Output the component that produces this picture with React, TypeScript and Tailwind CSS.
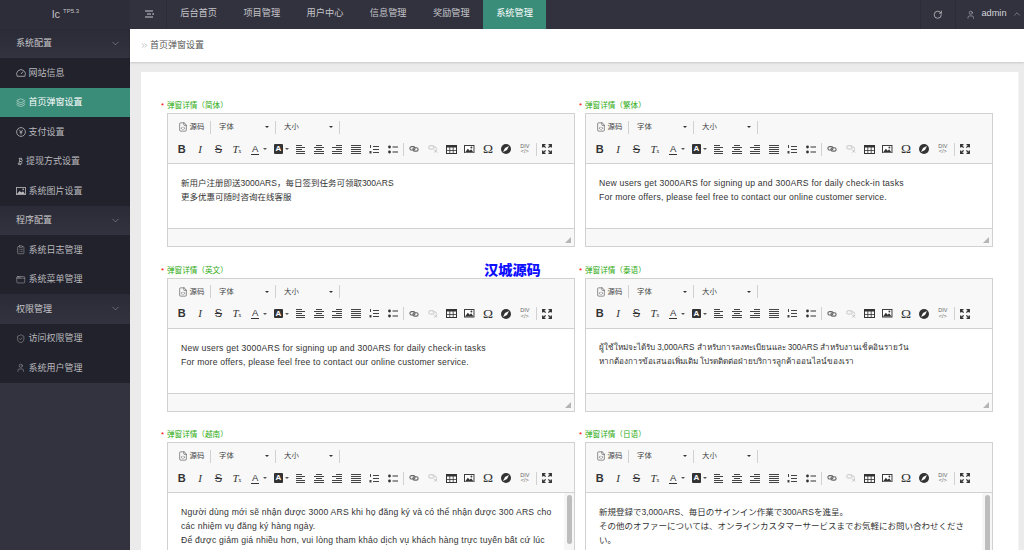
import React from "react";
import { ChevronDown, ChevronUp, RotateCw, User, Layers, Bitcoin, ClipboardList, AppWindow, ShieldCheck, FileCode, ChevronsRight } from "lucide-react";

const Lines = ({ rows }: { rows: [number, number][] }) => (
  <svg width="10" height="9" viewBox="0 0 10 9" fill="#444">
    {rows.map(([x, w], i) => (
      <rect key={i} x={x} y={i * 2} width={w} height="1" />
    ))}
  </svg>
);

const Btn = ({ children }: { children: React.ReactNode }) => (
  <span className="w-[18.4px] h-[14px] flex items-center justify-center shrink-0">{children}</span>
);

const CaretBtn = ({ children }: { children: React.ReactNode }) => (
  <span className="w-[22.7px] h-[14px] flex items-center pl-[5px] shrink-0 relative">
    {children}
    <span className="absolute left-[16.5px] top-[6px] w-0 h-0 border-x-[2px] border-x-transparent border-t-[2px] border-t-[#555]" />
  </span>
);

const Sep = () => <span className="w-px h-[13px] bg-[#d1d1d1] shrink-0" />;

const Select = ({ label, width }: { label: string; width: string }) => (
  <span className={`flex items-center ${width} h-[14px] pl-[8px] relative shrink-0`}>
    <span className="text-[7.4px] text-[#444]">{label}</span>
    <span className="absolute right-[6px] top-[6px] w-0 h-0 border-x-[2px] border-x-transparent border-t-[2px] border-t-[#333]" />
  </span>
);

const Toolbar = () => (
  <div className="h-[50px] bg-[#f8f8f8] border-b border-[#d1d1d1] shrink-0">
    <div className="h-[14px] mt-[6px] flex items-center pl-[10px]">
      <FileCode size={10} strokeWidth={1.4} color="#444" />
      <span className="text-[7.4px] text-[#444] ml-[1.5px] w-[20.5px]">源码</span>
      <Sep />
      <Select label="字体" width="w-[64px]" />
      <Sep />
      <Select label="大小" width="w-[63px]" />
      <Sep />
    </div>
    <div className="h-[14px] mt-[8px] flex items-center pl-[4.5px]">
      <Btn><span className="text-[11px] font-bold text-[#333]">B</span></Btn>
      <Btn><span className="text-[11px] italic font-['Liberation_Serif',serif] text-[#333]">I</span></Btn>
      <Btn><span className="text-[11px] line-through text-[#333]">S</span></Btn>
      <Btn><span className="text-[11px] italic font-['Liberation_Serif',serif] text-[#333] leading-none">T<span className="text-[5.5px] not-italic">x</span></span></Btn>
      <CaretBtn><span className="text-[9.5px] leading-[10px] border-b border-[#333] text-[#333] px-[1px]">A</span></CaretBtn>
      <CaretBtn><span className="w-[9.5px] h-[9.5px] bg-[#333] rounded-[1px] flex items-center justify-center text-[8px] font-bold text-white">A</span></CaretBtn>
      <Btn><Lines rows={[[0, 6], [0, 9], [0, 6], [0, 9], [0, 9]]} /></Btn>
      <Btn><Lines rows={[[2, 6], [0, 10], [2, 6], [0, 10], [0, 10]]} /></Btn>
      <Btn><Lines rows={[[4, 6], [0, 10], [4, 6], [0, 10], [0, 10]]} /></Btn>
      <Btn><Lines rows={[[0, 10], [0, 10], [0, 10], [0, 10], [0, 10]]} /></Btn>
      <Btn>
        <svg width="10" height="9" viewBox="0 0 10 9" fill="#444">
          <rect x="4" y="1" width="6" height="1" /><rect x="4" y="4" width="6" height="1" /><rect x="4" y="7" width="6" height="1" />
          <rect x="1" y="0" width="1" height="3" /><rect x="0.5" y="6" width="2" height="2.5" />
        </svg>
      </Btn>
      <Btn>
        <svg width="10" height="9" viewBox="0 0 10 9" fill="#333">
          <circle cx="1.5" cy="2" r="1.4" /><circle cx="1.5" cy="7" r="1.4" /><rect x="4.5" y="1.5" width="5.5" height="1" /><rect x="4.5" y="6.5" width="5.5" height="1" />
        </svg>
      </Btn>
      <span className="w-px h-[13px] bg-[#d1d1d1] shrink-0 ml-[1.5px] mr-[1px]" />
      <Btn>
        <svg width="10" height="6" viewBox="0 0 11 7" fill="none" stroke="#666" strokeWidth="1.3">
          <rect x="0.7" y="0.7" width="6" height="4" rx="2" /><rect x="4.3" y="2" width="6" height="4" rx="2" />
        </svg>
      </Btn>
      <Btn>
        <svg width="10" height="8" viewBox="0 0 11 9" fill="none" stroke="#d0d0d0" strokeWidth="1.3">
          <rect x="0.7" y="0.7" width="6" height="4" rx="2" /><path d="M5 2h2.5a2 2 0 0 1 1.5 3" /><path d="M7 5.5l3 3M10 5.5l-3 3" strokeWidth="1" stroke="#bbb" />
        </svg>
      </Btn>
      <Btn>
        <svg width="11" height="9" viewBox="0 0 11 9" fill="none" stroke="#333">
          <rect x="0.5" y="0.5" width="10" height="8" /><rect x="0" y="0" width="11" height="2.5" fill="#333" stroke="none" /><path d="M0 5.5h11M3.8 2v7M7.2 2v7" strokeWidth="0.8" />
        </svg>
      </Btn>
      <Btn>
        <svg width="10.5" height="8.5" viewBox="0 0 11 9">
          <rect x="0.5" y="0.5" width="10" height="8" fill="#fff" stroke="#333" />
          <path d="M1 8l3-4 2 2 1.5-1.5L10 8z" fill="#333" /><circle cx="7.8" cy="2.6" r="1" fill="#333" />
        </svg>
      </Btn>
      <Btn><span className="text-[13.5px] leading-none font-['Liberation_Serif',serif] text-[#333]">Ω</span></Btn>
      <Btn>
        <svg width="10" height="10" viewBox="0 0 10 10">
          <circle cx="5" cy="5" r="5" fill="#333" /><path d="M8 2L6 6 2 8l2-4z" fill="#fff" />
        </svg>
      </Btn>
      <Btn>
        <span className="flex flex-col items-center text-[5.5px] leading-[5.5px] text-[#666]"><span>DIV</span><span>&lt;/&gt;</span></span>
      </Btn>
      <span className="w-px h-[13px] bg-[#d1d1d1] shrink-0 ml-[1.5px] mr-[1px]" />
      <Btn>
        <svg width="10" height="10" viewBox="0 0 10 10" fill="none" stroke="#333" strokeWidth="1.3">
          <path d="M0.7 3.5V0.7H3.5M6.5 0.7H9.3V3.5M9.3 6.5V9.3H6.5M3.5 9.3H0.7V6.5M1 1l2.6 2.6M9 1L6.4 3.6M9 9L6.4 6.4M1 9l2.6-2.6" />
        </svg>
      </Btn>
    </div>
  </div>
);

const Editor = ({ title, lines, scroll, thumbEnd, textCls }: { title: string; lines: string[]; scroll?: boolean; thumbEnd?: string; textCls: string }) => (
  <div className="flex flex-col">
    <div className="h-[15px] flex items-start text-[7.6px] leading-[15px] pl-px">
      <span className="text-[#f00] w-[6px] shrink-0 text-[8px]">*</span>
      <span className="text-[#2eaa10]">{title}</span>
    </div>
    <div className="ml-[7px] h-[134px] border border-[#d1d1d1] flex flex-col">
      <Toolbar />
      <div className="flex-1 bg-white flex min-h-0 overflow-hidden">
        <div className={`flex-1 pt-[12px] pl-[13px] leading-[14px] text-[#333] whitespace-nowrap overflow-hidden ${textCls}`}>
          {lines.map((l) => (
            <div key={l}>{l}</div>
          ))}
        </div>
        {scroll && (
          <div className="w-[10px] bg-[#f6f6f6] pt-[2px] px-[2.5px] shrink-0">
            <div className={`${thumbEnd} w-[5px] bg-[#bdbdbd] rounded-full`} />
          </div>
        )}
      </div>
      {!scroll && (
        <div className="h-[18px] bg-[#f8f8f8] border-t border-[#d1d1d1] shrink-0 flex justify-end items-end pr-[3px] pb-[3px]">
          <svg width="6" height="6" viewBox="0 0 6 6"><path d="M6 0V6H0z" fill="#b5b5b5" /></svg>
        </div>
      )}
    </div>
  </div>
);

const Group = ({ label }: { label: string }) => (
  <div className="h-[29.5px] flex items-center justify-between pl-[16px] pr-[9px] text-[9px] text-[#c6c6c8] bg-[linear-gradient(#2b2b37,#33333f)]">
    <span className="pt-[1px]">{label}</span>
    <ChevronDown size={11} strokeWidth={1} color="#b0b0b4" />
  </div>
);

const Item = ({ icon, label, active, gap }: { icon: React.ReactNode; label: string; active?: boolean; gap?: string }) => (
  <div className={`h-[29.5px] flex items-center pl-[16px] text-[9px] ${active ? "bg-[#3a8d79] text-white" : "text-[#b9b9bc]"}`}>
    <span className={`flex items-center justify-start shrink-0 ${gap ?? "w-[12.5px]"}`}>{icon}</span>
    <span className="pt-[1px]">{label}</span>
  </div>
);

const ic = { size: 9.5, strokeWidth: 1.2 };

const YenIcon = () => (
  <svg width="10" height="10" viewBox="0 0 10 10" fill="none" stroke="currentColor" strokeWidth="0.8">
    <circle cx="5" cy="5" r="4.4" /><path d="M3.2 2.8L5 5l1.8-2.2M5 5v2.6M3.6 5.3h2.8" />
  </svg>
);

const GaugeIcon = () => (
  <svg width="10" height="9" viewBox="0 0 10 9" fill="none" stroke="currentColor" strokeWidth="0.8">
    <path d="M1.2 8.3A4.4 4.4 0 1 1 8.8 8.3z" /><path d="M5 6l2-2.4" />
  </svg>
);

const PictureIcon = () => (
  <svg width="10" height="8" viewBox="0 0 10 8">
    <rect x="0.4" y="0.4" width="9.2" height="7.2" fill="none" stroke="currentColor" strokeWidth="0.8" />
    <path d="M1 7l2.6-3 1.8 1.6 1.6-1.4L9 7z" fill="currentColor" /><circle cx="7.2" cy="2.4" r="0.8" fill="currentColor" />
  </svg>
);

const Nav = ({ label, active }: { label: string; active?: boolean }) => (
  <div className={`w-[63.2px] h-full flex items-center justify-center shrink-0 text-[9.2px] ${active ? "bg-[#3a8d79] text-white" : "text-[#c4c4c8]"}`}>{label}</div>
);

const en = "text-[8.65px] tracking-[0.21px]";
const cjk = "text-[8.5px]";
const thai = "text-[8.15px]";

export default function App() {
  return (
    <div className="w-[1024px] h-[550px] overflow-hidden flex flex-col bg-[#ebebeb] relative font-['Liberation_Sans','Noto_Sans_CJK_SC',sans-serif]">
      <header className="h-[28.5px] flex bg-[#32323f] shrink-0">
        <div className="w-[130px] h-full bg-[#2d2d39] flex items-center justify-center text-[#c4c4c8]">
          <span className="text-[11px] ml-[1px]">lc</span>
          <span className="text-[6px] ml-[3px] mb-[6px]">TP5.3</span>
        </div>
        <div className="w-[37px] h-full border-r border-[#2c2c38] flex items-center justify-center pl-[2px]">
          <svg width="9" height="8" viewBox="0 0 9 8" fill="#c8c8cc">
            <rect x="0" y="0.5" width="8" height="1" /><rect x="2" y="3.5" width="4" height="1" /><rect x="0" y="6.5" width="8" height="1" /><rect x="7.6" y="3" width="1" height="2" />
          </svg>
        </div>
        <Nav label="后台首页" />
        <Nav label="项目管理" />
        <Nav label="用户中心" />
        <Nav label="信息管理" />
        <Nav label="奖励管理" />
        <Nav label="系统管理" active />
        <div className="flex-1" />
        <div className="w-[36px] h-full border-x border-[#2c2c38] flex items-center justify-center">
          <RotateCw size={9.5} strokeWidth={1.8} color="#d0d0d4" />
        </div>
        <div className="w-[68px] h-full flex items-center pl-[10px] text-[9.2px] text-[#d6d6da]">
          <User size={9.5} strokeWidth={1.2} />
          <span className="ml-[6px]">admin</span>
          <ChevronUp size={10} strokeWidth={1} className="ml-[5px] shrink-0" />
        </div>
      </header>
      <div className="flex-1 flex min-h-0">
        <aside className="w-[130px] bg-[#33333f] shrink-0">
          <div className="bg-[#22222d]">
            <Group label="系统配置" />
            <Item icon={<GaugeIcon />} label="网站信息" />
            <Item icon={<Layers {...ic} />} label="首页弹窗设置" active />
            <Item icon={<YenIcon />} label="支付设置" />
            <Item icon={<Bitcoin size={9} strokeWidth={2} />} label="提现方式设置" gap="w-[10px]" />
            <Item icon={<PictureIcon />} label="系统图片设置" />
            <Group label="程序配置" />
            <Item icon={<ClipboardList {...ic} />} label="系统日志管理" />
            <Item icon={<AppWindow {...ic} />} label="系统菜单管理" />
            <Group label="权限管理" />
            <Item icon={<ShieldCheck {...ic} />} label="访问权限管理" />
            <Item icon={<User {...ic} />} label="系统用户管理" />
          </div>
        </aside>
        <main className="flex-1 min-w-0 flex flex-col">
          <div className="h-[33px] bg-white shadow-[0_1px_2px_rgba(0,0,0,0.15)] flex items-center pl-[10px] pt-[1px] text-[9px] text-[#555] shrink-0">
            <ChevronsRight size={9} strokeWidth={1.3} color="#888" />
            <span className="ml-[1px]">首页弹窗设置</span>
          </div>
          <div className="flex-1 min-h-0 ml-[11px] mr-[5px] mt-[10.5px] bg-white pl-[19px] pt-[26px] overflow-hidden border-r border-[#f5f5f5]">
            <div className="grid grid-cols-[415px_415px] gap-x-[3px] gap-y-[15.5px]">
              <Editor textCls={cjk} title="弹窗详情（简体）" lines={["新用户注册即送3000ARS，每日签到任务可领取300ARS", "更多优惠可随时咨询在线客服"]} />
              <Editor textCls={en} title="弹窗详情（繁体）" lines={["New users get 3000ARS for signing up and 300ARS for daily check-in tasks", "For more offers, please feel free to contact our online customer service."]} />
              <Editor textCls={en} title="弹窗详情（英文）" lines={["New users get 3000ARS for signing up and 300ARS for daily check-in tasks", "For more offers, please feel free to contact our online customer service."]} />
              <Editor textCls={thai} title="弹窗详情（泰语）" lines={["ผู้ใช้ใหม่จะได้รับ 3,000ARS สำหรับการลงทะเบียนและ 300ARS สำหรับงานเช็คอินรายวัน", "หากต้องการข้อเสนอเพิ่มเติม โปรดติดต่อฝ่ายบริการลูกค้าออนไลน์ของเรา"]} />
              <Editor textCls={en} scroll thumbEnd="h-[49px]" title="弹窗详情（越南）" lines={["Người dùng mới sẽ nhận được 3000 ARS khi họ đăng ký và có thể nhận được 300 ARS cho", "các nhiệm vụ đăng ký hàng ngày.", "Để được giảm giá nhiều hơn, vui lòng tham khảo dịch vụ khách hàng trực tuyến bất cứ lúc", "nào."]} />
              <Editor textCls={cjk} scroll thumbEnd="h-[70px]" title="弹窗详情（日语）" lines={["新規登録で3,000ARS、毎日のサインイン作業で300ARSを進呈。", "その他のオファーについては、オンラインカスタマーサービスまでお気軽にお問い合わせくださ", "い。"]} />
            </div>
          </div>
        </main>
      </div>
      <span className="absolute left-[484px] top-[261px] text-[14.2px] leading-[17px] font-black text-[#0f0fff] font-['Noto_Sans_CJK_SC',sans-serif]">汉城源码</span>
    </div>
  );
}
